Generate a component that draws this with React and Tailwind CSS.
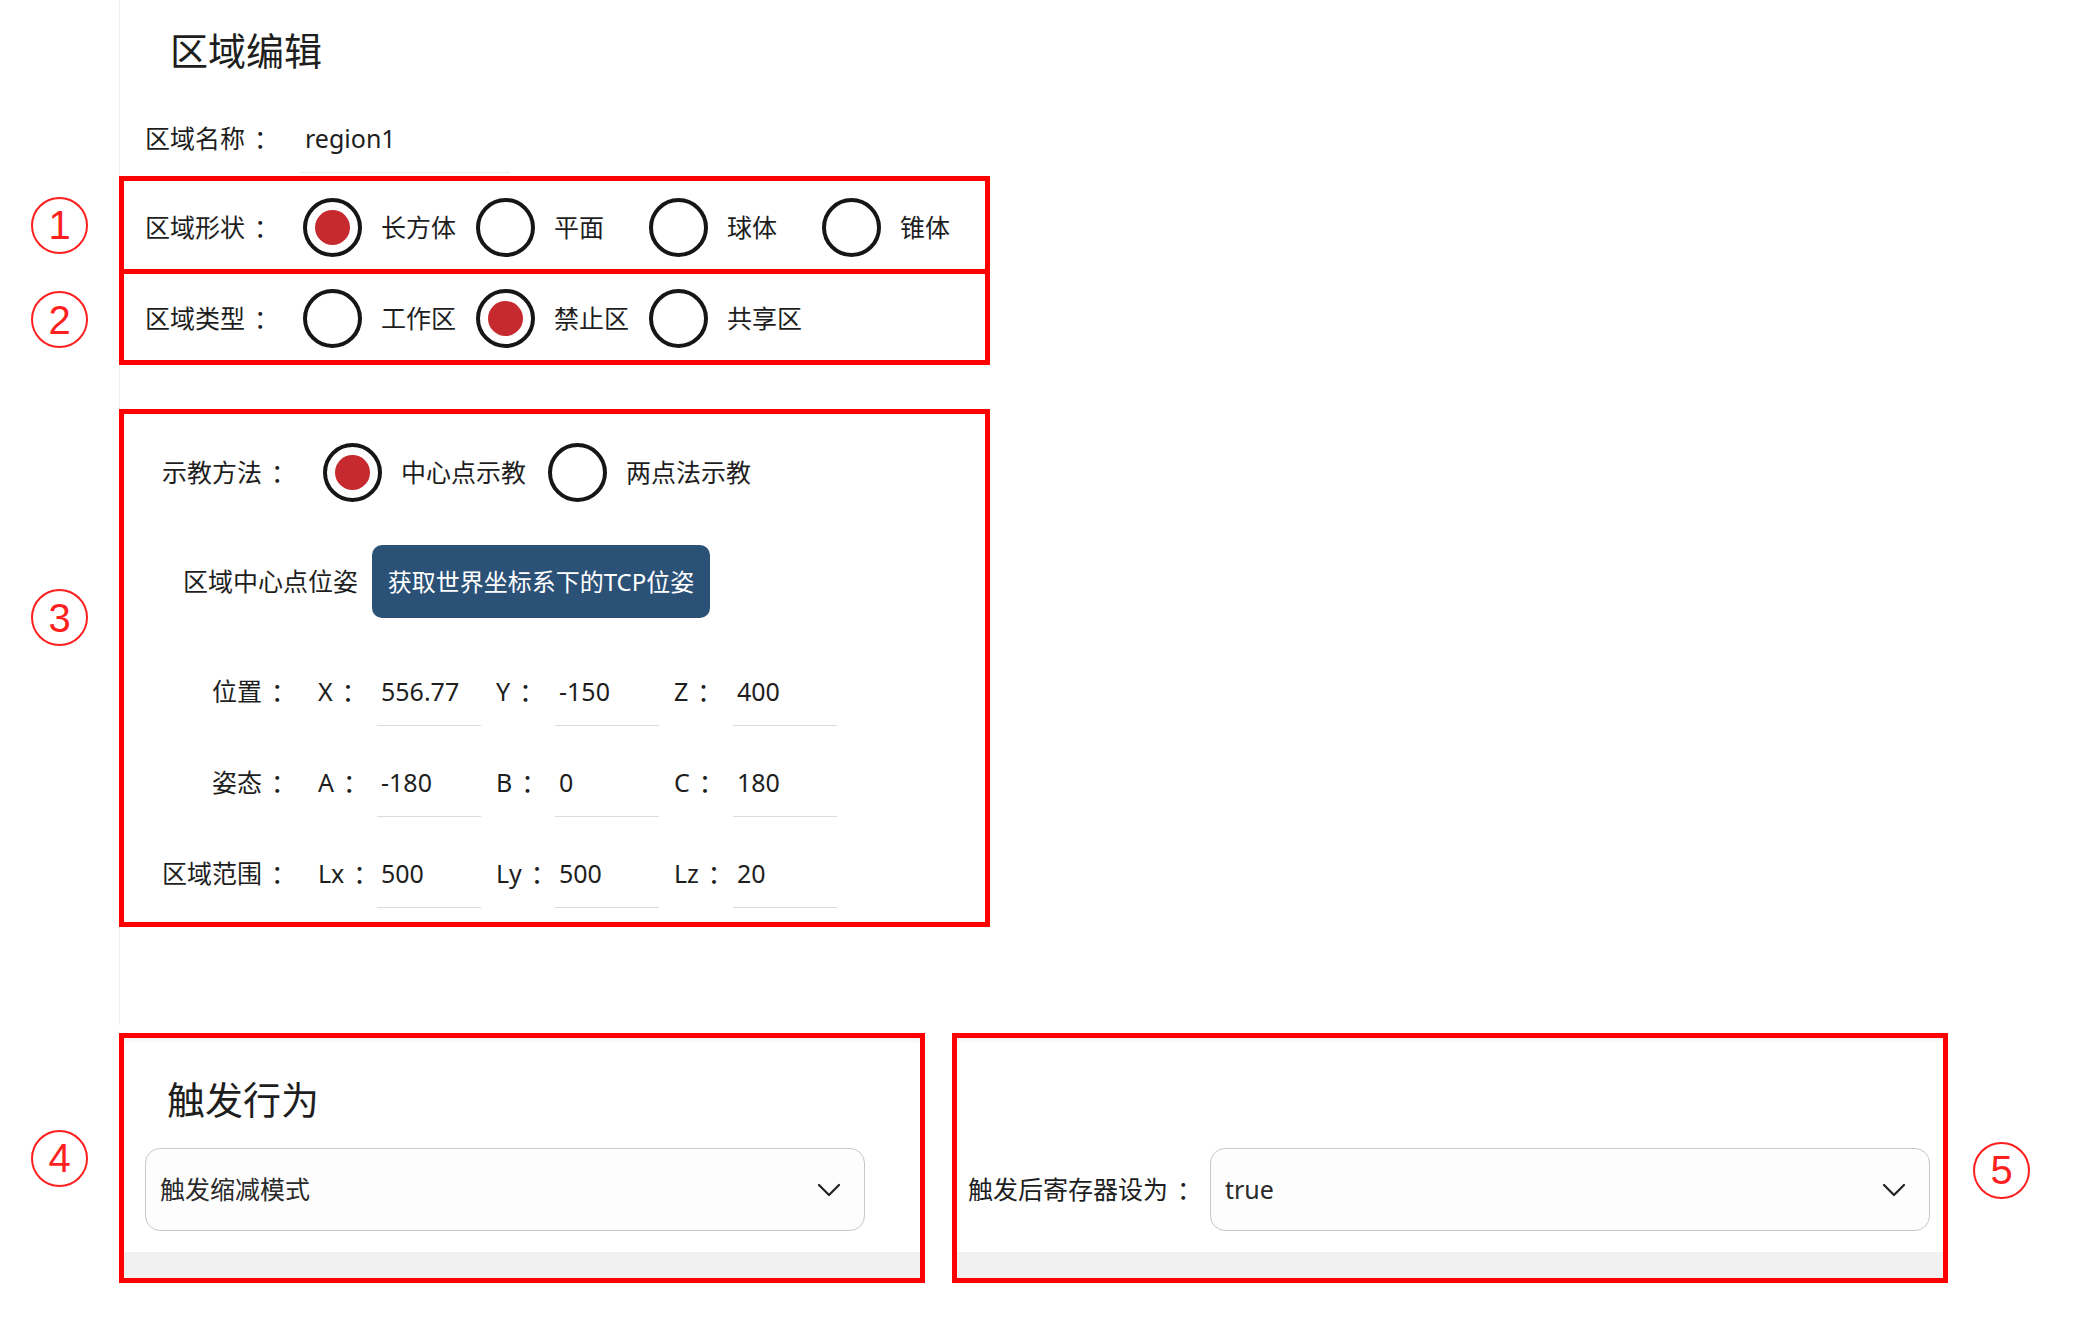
import React from "react";

// circled callout number beside a block
const Mark = ({ n }) => (
  <div className="w-[57px] h-[57px] rounded-full border-[2.5px] border-[#ff1f1f] flex items-center justify-center text-[#ff1f1f] text-[40px] leading-none font-['Liberation_Sans',sans-serif]">
    {n}
  </div>
);

const Colon = () => <span className="ml-[9px]">：</span>;

const Radio = ({ checked }) => (
  <div className="w-[59px] h-[59px] shrink-0 rounded-full border-[4px] border-[#161616] bg-white flex items-center justify-center">
    {checked && <div className="w-[35px] h-[35px] rounded-full bg-[#c62a2f]" />}
  </div>
);

const RadioGroup = ({ options, selected, itemWidth }) => (
  <div className="flex items-center shrink-0">
    {options.map((opt) => (
      <div key={opt} className={`flex items-center shrink-0 gap-[19px] ${itemWidth}`}>
        <Radio checked={opt === selected} />
        <span className="whitespace-nowrap">{opt}</span>
      </div>
    ))}
  </div>
);

// left gutter + panel column with the faint divider
const Row = ({ mark, gutter = "", className = "", children }) => (
  <div className="flex">
    <div className={`w-[119px] shrink-0 flex justify-center ${gutter}`}>{mark && <Mark n={mark} />}</div>
    <div className={`w-[871px] border-l border-[#efefef] ${className}`}>{children}</div>
  </div>
);

const Field = ({ value }) => (
  <div className="w-[104px] h-[68px] border-b border-[#dcdcdc] flex items-center pl-[4px]">{value}</div>
);

const CoordRow = ({ label, items }) => (
  <div className="flex items-center pl-[38px]">
    <div className="w-[134px] shrink-0 text-right mr-[22px] whitespace-nowrap">
      {label}
      <Colon />
    </div>
    {items.map(([axis, value]) => (
      <div key={axis} className="flex items-center shrink-0 mr-[15px]">
        <div className="w-[59px] whitespace-nowrap">
          {axis}
          <Colon />
        </div>
        <Field value={value} />
      </div>
    ))}
  </div>
);

const Select = ({ value }) => (
  <div className="w-[720px] h-[83px] shrink-0 rounded-[15px] border border-[#c8c8c8] bg-[#fdfdfd] flex items-center justify-between pl-[14px] pr-[23px]">
    <span className="text-[25px] text-[#2a2a2a]">{value}</span>
    <svg width="24" height="14" viewBox="0 0 24 14">
      <path d="M2 2l10 10 10-10" fill="none" stroke="#222" strokeWidth="2.2" strokeLinecap="round" strokeLinejoin="round" />
    </svg>
  </div>
);

export default function App() {
  return (
    <div className="w-[2076px] h-[1342px] bg-white text-[#1e1e1e] text-[25px] font-['Noto_Sans','Noto_Sans_CJK_SC',sans-serif] overflow-hidden">
      {/* region editor panel */}
      <Row className="pt-[27px] pl-[50px]">
        <h1 className="text-[38px] leading-[46px] font-normal">区域编辑</h1>
      </Row>

      <Row className="pt-[48px] pb-[3px] pl-[25px] flex items-start">
        <div className="w-[155px] shrink-0 leading-[34px] whitespace-nowrap">
          区域名称
          <Colon />
        </div>
        <div className="w-[210px] h-[52px] border-b border-[#ebebeb] leading-[34px] pl-[5px]">region1</div>
      </Row>

      <Row mark="1" gutter="items-center">
        <div className="-ml-px w-[871px] h-[98px] border-[5px] border-[#ff0000] flex items-center pl-[21px] pt-[5px] overflow-hidden">
          <div className="w-[158px] shrink-0 whitespace-nowrap">
            区域形状
            <Colon />
          </div>
          <RadioGroup options={["长方体", "平面", "球体", "锥体"]} selected="长方体" itemWidth="w-[173px]" />
        </div>
      </Row>

      <Row mark="2" gutter="items-center">
        <div className="-ml-px w-[871px] h-[91px] border-[5px] border-t-0 border-[#ff0000] flex items-center pl-[21px] pt-[3px] overflow-hidden">
          <div className="w-[158px] shrink-0 whitespace-nowrap">
            区域类型
            <Colon />
          </div>
          <RadioGroup options={["工作区", "禁止区", "共享区"]} selected="禁止区" itemWidth="w-[173px]" />
        </div>
      </Row>

      <Row mark="3" gutter="items-start pt-[224px]" className="pt-[44px]">
        <div className="-ml-px w-[871px] h-[518px] border-[5px] border-[#ff0000] flex flex-col pt-[29px]">
          <div className="h-[59px] flex items-center pl-[38px]">
            <div className="w-[161px] shrink-0 whitespace-nowrap">
              示教方法
              <Colon />
            </div>
            <RadioGroup options={["中心点示教", "两点法示教"]} selected="中心点示教" itemWidth="w-[225px]" />
          </div>

          <div className="mt-[43px] h-[73px] flex items-center pl-[59px]">
            <span className="whitespace-nowrap">区域中心点位姿</span>
            <button className="ml-[14px] w-[338px] h-[73px] rounded-[10px] bg-[#2b5177] text-white text-[24px] flex items-center justify-center whitespace-nowrap">
              获取世界坐标系下的TCP位姿
            </button>
          </div>

          <div className="mt-[40px] flex flex-col gap-[23px]">
            <CoordRow label="位置" items={[["X", "556.77"], ["Y", "-150"], ["Z", "400"]]} />
            <CoordRow label="姿态" items={[["A", "-180"], ["B", "0"], ["C", "180"]]} />
            <CoordRow label="区域范围" items={[["Lx", "500"], ["Ly", "500"], ["Lz", "20"]]} />
          </div>
        </div>
      </Row>

      <Row className="h-[98px]" />

      {/* trigger settings */}
      <div className="flex items-center mt-[8px]">
        <div className="w-[119px] shrink-0 flex justify-center">
          <Mark n="4" />
        </div>

        <div className="w-[806px] h-[250px] shrink-0 border-[5px] border-[#ff0000] flex flex-col">
          <div className="flex-1 bg-white shadow-[inset_0_6px_6px_-5px_rgba(0,0,0,0.08)] pt-[38px] pl-[21px]">
            <h2 className="pl-[22px] text-[38px] leading-[46px] font-normal">触发行为</h2>
            <div className="mt-[26px]">
              <Select value="触发缩减模式" />
            </div>
          </div>
          <div className="h-[26px] bg-[#f1f1f1]" />
        </div>

        <div className="ml-[27px] w-[996px] h-[250px] shrink-0 border-[5px] border-[#ff0000] flex flex-col">
          <div className="flex-1 bg-white shadow-[inset_0_6px_6px_-5px_rgba(0,0,0,0.08)] pt-[110px] pl-[11px]">
            <div className="flex items-center">
              <div className="w-[242px] shrink-0 whitespace-nowrap">
                触发后寄存器设为
                <Colon />
              </div>
              <Select value="true" />
            </div>
          </div>
          <div className="h-[26px] bg-[#f1f1f1]" />
        </div>

        <div className="ml-[25px] mt-[24px]">
          <Mark n="5" />
        </div>
      </div>
    </div>
  );
}
